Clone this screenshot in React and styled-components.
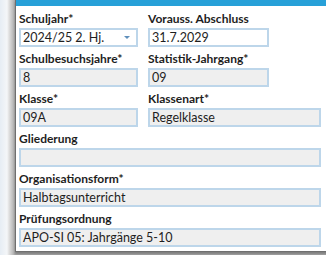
import React from "react";
import styled, { createGlobalStyle } from "styled-components";

const GlobalStyle = createGlobalStyle`
  html, body {
    margin: 0;
    padding: 0;
    overflow: hidden;
    background: #e4ebf2;
  }
`;

const Page = styled.div`
  height: 255px;
  width: 326px;
  padding-left: 15px;
  box-sizing: border-box;
  overflow: hidden;
  background: linear-gradient(90deg, #e6edf4 0px, #f4f6f8 7px, #e0e0e0 9px, #a8a8a8 15px);
`;

const Dialog = styled.div`
  width: 330px;
  height: 252px;
  box-sizing: border-box;
  background: #ffffff;
  border-left: 1px solid #6f6f6f;
  border-bottom: 1px solid #6f6f6f;
  box-shadow: 0 2px 2px rgba(0, 0, 0, 0.25);
  display: flex;
  flex-direction: column;
`;

const TitleBar = styled.div`
  height: 6px;
  background: #27a0d8;
  flex: none;
`;

const Form = styled.div`
  display: grid;
  grid-template-columns: 119px 121px 42px;
  column-gap: 10px;
  row-gap: 4px;
  padding: 5px 0 0 3px;
`;

const Field = styled.div`
  display: flex;
  flex-direction: column;
  gap: 1px;
  grid-column: ${(p) => p.$span || "auto"};
`;

const Label = styled.div`
  font-family: Lato, "Noto Sans", sans-serif;
  font-weight: 700;
  font-size: 12px;
  line-height: 16px;
  color: #1e1e1e;
  white-space: nowrap;
`;

const Input = styled.div`
  position: relative;
  height: 19px;
  width: ${(p) => p.$width || "auto"};
  box-sizing: border-box;
  border: 2px solid #bdd6ea;
  background: ${(p) => (p.$editable ? "#ffffff" : "#efefef")};
  font-family: Lato, "Noto Sans", sans-serif;
  font-size: 12.5px;
  line-height: 15px;
  color: #1e1e1e;
  padding-left: 2px;
  white-space: nowrap;
  overflow: hidden;
`;

const Arrow = styled.span`
  position: absolute;
  right: 6px;
  top: 6px;
  width: 0;
  height: 0;
  border-left: 3px solid transparent;
  border-right: 3px solid transparent;
  border-top: 3px solid #5f8fbb;
`;

export default function App() {
  return (
    <>
      <GlobalStyle />
      <Page>
        <Dialog>
          <TitleBar />
          <Form>
            <Field>
              <Label>Schuljahr*</Label>
              <Input $editable>
                2024/25 2. Hj.
                <Arrow />
              </Input>
            </Field>
            <Field $span="span 2">
              <Label>Vorauss. Abschluss</Label>
              <Input $editable $width="121px">31.7.2029</Input>
            </Field>
            <Field>
              <Label>Schulbesuchsjahre*</Label>
              <Input>8</Input>
            </Field>
            <Field $span="span 2">
              <Label>Statistik-Jahrgang*</Label>
              <Input $width="121px">09</Input>
            </Field>
            <Field>
              <Label>Klasse*</Label>
              <Input>09A</Input>
            </Field>
            <Field $span="span 2">
              <Label>Klassenart*</Label>
              <Input>Regelklasse</Input>
            </Field>
            <Field $span="1 / -1">
              <Label>Gliederung</Label>
              <Input />
            </Field>
            <Field $span="1 / -1">
              <Label>Organisationsform*</Label>
              <Input>Halbtagsunterricht</Input>
            </Field>
            <Field $span="1 / -1">
              <Label>Prüfungsordnung</Label>
              <Input>APO-SI 05: Jahrgänge 5-10</Input>
            </Field>
          </Form>
        </Dialog>
      </Page>
    </>
  );
}
